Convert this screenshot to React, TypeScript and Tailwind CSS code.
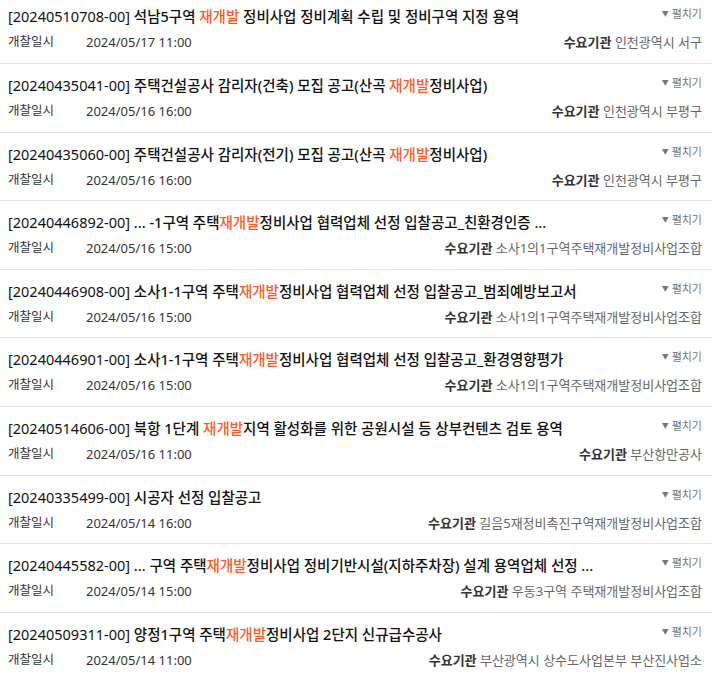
import { Fragment } from "react";

type Bid = {
  no: string;
  title: string;
  date: string;
  agency: string;
};

const BIDS: Bid[] = [
  { no: "20240510708-00", title: "석남5구역 재개발 정비사업 정비계획 수립 및 정비구역 지정 용역", date: "2024/05/17 11:00", agency: "인천광역시 서구" },
  { no: "20240435041-00", title: "주택건설공사 감리자(건축) 모집 공고(산곡 재개발정비사업)", date: "2024/05/16 16:00", agency: "인천광역시 부평구" },
  { no: "20240435060-00", title: "주택건설공사 감리자(전기) 모집 공고(산곡 재개발정비사업)", date: "2024/05/16 16:00", agency: "인천광역시 부평구" },
  { no: "20240446892-00", title: "... -1구역 주택재개발정비사업 협력업체 선정 입찰공고_친환경인증 ...", date: "2024/05/16 15:00", agency: "소사1의1구역주택재개발정비사업조합" },
  { no: "20240446908-00", title: "소사1-1구역 주택재개발정비사업 협력업체 선정 입찰공고_범죄예방보고서", date: "2024/05/16 15:00", agency: "소사1의1구역주택재개발정비사업조합" },
  { no: "20240446901-00", title: "소사1-1구역 주택재개발정비사업 협력업체 선정 입찰공고_환경영향평가", date: "2024/05/16 15:00", agency: "소사1의1구역주택재개발정비사업조합" },
  { no: "20240514606-00", title: "북항 1단계 재개발지역 활성화를 위한 공원시설 등 상부컨텐츠 검토 용역", date: "2024/05/16 11:00", agency: "부산항만공사" },
  { no: "20240335499-00", title: "시공자 선정 입찰공고", date: "2024/05/14 16:00", agency: "길음5재정비촉진구역재개발정비사업조합" },
  { no: "20240445582-00", title: "... 구역 주택재개발정비사업 정비기반시설(지하주차장) 설계 용역업체 선정 ...", date: "2024/05/14 15:00", agency: "우동3구역 주택재개발정비사업조합" },
  { no: "20240509311-00", title: "양정1구역 주택재개발정비사업 2단지 신규급수공사", date: "2024/05/14 11:00", agency: "부산광역시 상수도사업본부 부산진사업소" },
];

const KEYWORD = "재개발";

// highlight the search keyword inside a title
function Highlight({ text }: { text: string }) {
  const parts = text.split(KEYWORD);
  return (
    <>
      {parts.map((p, i) => (
        <Fragment key={i}>
          {p}
          {i < parts.length - 1 && <span className="text-[#ff5a1f]">{KEYWORD}</span>}
        </Fragment>
      ))}
    </>
  );
}

function BidRow({ bid }: { bid: Bid }) {
  return (
    <li className="h-[68.6px] border-b border-[#e6e6e6] pl-[8px] pr-[10px] pt-[10px]">
      <div className="flex items-start justify-between">
        <p className="whitespace-nowrap text-[14.5px] font-medium leading-[22px] text-[#111]">
          <span className="font-normal">[{bid.no}]</span> <Highlight text={bid.title} />
        </p>
        <button className="flex shrink-0 items-center gap-[3px] pt-[1px] text-[11px] leading-[16px] text-[#777]">
          <span className="text-[7px]">▼</span>
          펼치기
        </button>
      </div>
      <div className="mt-[5px] flex items-center justify-between text-[13px] leading-[20px]">
        <div className="flex items-center text-[#333]">
          <span className="w-[78px] text-[12.5px]">개찰일시</span>
          <span>{bid.date}</span>
        </div>
        <div className="whitespace-nowrap">
          <span className="font-bold text-[#333]">수요기관</span>{" "}
          <span className="text-[#666]">{bid.agency}</span>
        </div>
      </div>
    </li>
  );
}

export default function App() {
  return (
    <div
      className="h-[675px] w-[712px] overflow-hidden bg-white"
      style={{ fontFamily: '"Noto Sans", "Noto Sans CJK KR", sans-serif' }}
    >
      <ul className="-mt-[4.6px]">
        {BIDS.map((b) => (
          <BidRow key={b.no} bid={b} />
        ))}
      </ul>
    </div>
  );
}
